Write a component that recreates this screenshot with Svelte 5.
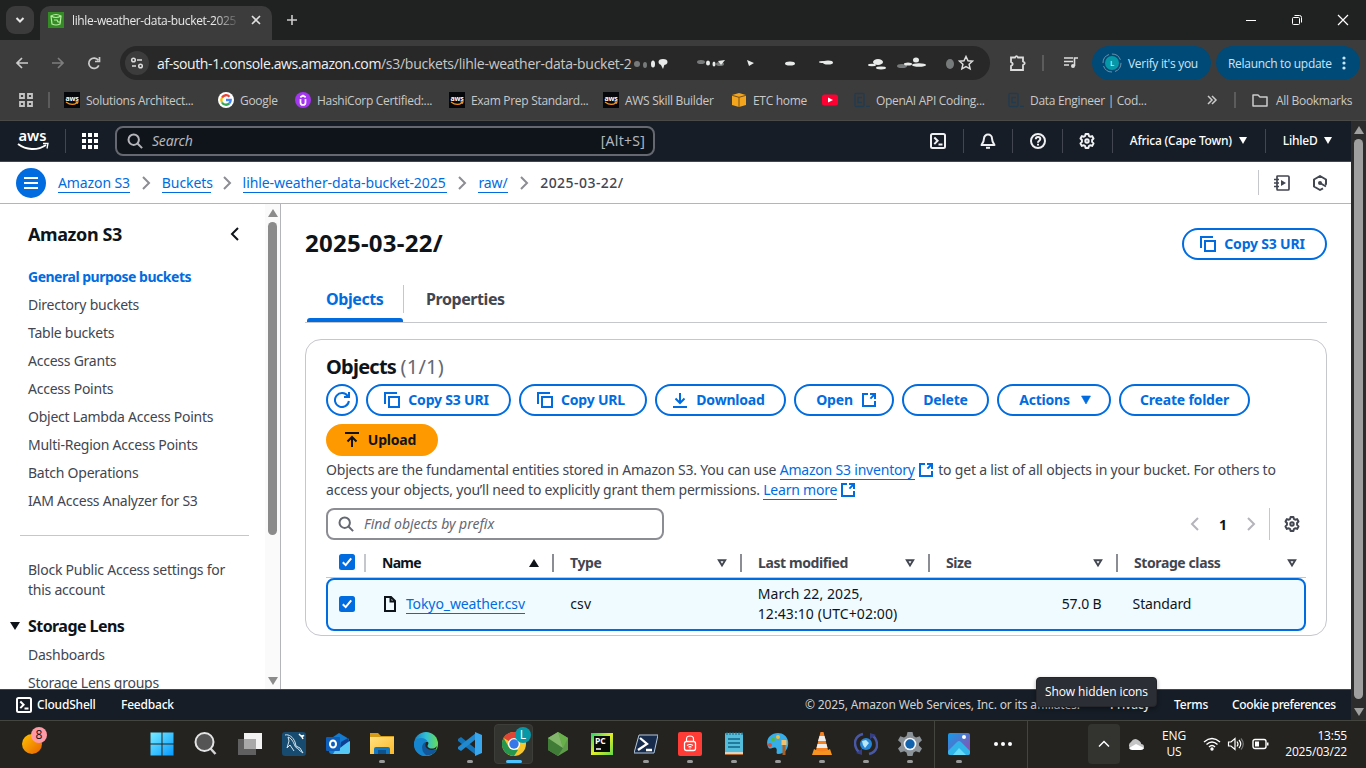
<script>
  const bookmarks = [
    { icon: 'aws', label: 'Solutions Architect...', w: 154 },
    { icon: 'google', label: 'Google', w: 77 },
    { icon: 'hashi', label: 'HashiCorp Certified:...', w: 154 },
    { icon: 'aws', label: 'Exam Prep Standard...', w: 154 },
    { icon: 'aws', label: 'AWS Skill Builder', w: 128 },
    { icon: 'cube', label: 'ETC home', w: 91 },
    { icon: 'youtube', label: '', w: 32 },
    { icon: 'code', label: 'OpenAI API Coding...', w: 154 },
    { icon: 'code', label: 'Data Engineer | Cod...', w: 197 }
  ];
  const crumbs = [
    { label: 'Amazon S3', w: 72 },
    { label: 'Buckets', w: 49 },
    { label: 'lihle-weather-data-bucket-2025', w: 204 },
    { label: 'raw/', w: 30 }
  ];
  const nav = ['General purpose buckets', 'Directory buckets', 'Table buckets', 'Access Grants', 'Access Points', 'Object Lambda Access Points', 'Multi-Region Access Points', 'Batch Operations', 'IAM Access Analyzer for S3'];
  const actions = [
    { label: 'Copy S3 URI', icon: 'copy', w: 145 },
    { label: 'Copy URL', icon: 'copy', w: 128 },
    { label: 'Download', icon: 'download', w: 131 },
    { label: 'Open', after: 'external', w: 100 },
    { label: 'Delete', w: 87 },
    { label: 'Actions', after: 'caret', w: 114 },
    { label: 'Create folder', w: 131 }
  ];
  const columns = ['Name', 'Type', 'Last modified', 'Size', 'Storage class'];
  const apps = ['start', 'search', 'tasks', 'mysql', 'outlook', 'files', 'edge', 'vscode', 'chrome', 'node', 'pycharm', 'shell', 'vpn', 'notepad', 'paint', 'vlc', 'sync', 'settings'];
  const running = ['files', 'vscode', 'shell', 'vpn', 'notepad', 'paint', 'vlc', 'sync', 'settings', 'photos'];
</script>

{#snippet icon(name)}
  <svg class="ic" viewBox="0 0 16 16" width="16" height="16" fill="none" stroke="currentColor" stroke-width="2">
    {#if name === 'copy'}
      <path d="M1 12V1h12M5 5h10v10H5z" />
    {:else if name === 'download'}
      <path d="M8 1v10M3.5 6.5 8 11l4.5-4.5M1 15h14" />
    {:else if name === 'upload'}
      <path d="M8 15V5M3.5 9.5 8 5l4.500 4.500M1 1h14" />
    {:else if name === 'external'}
      <path d="M7 2H2v12h12V9M9 2h5v5" /><path d="M14 2 8 8" stroke-dasharray="6.500 3" />
    {:else if name === 'caret'}
      <path d="M3.500 4h9L8 12z" fill="currentColor" stroke="currentColor" stroke-width=".6" />
    {:else if name === 'refresh'}
      <path d="M14.900 9A7 7 0 1 1 13.800 4.200M15 0v5h-5" />
    {:else if name === 'search'}
      <circle cx="6.700" cy="6.700" r="5.200" /><path d="m10.500 10.500 4.600 4.600" />
    {:else if name === 'gear'}
      <path d="M6.600 1h2.800l.5 2 1.200.7 2-.6 1.400 2.400-1.400 1.500v1.900l1.400 1.500-1.400 2.500-2-.6-1.200.7-.5 2H6.600l-.5-2-1.200-.7-2 .6-1.400-2.500 1.400-1.500V7L1.500 5.500l1.400-2.400 2 .6L6.100 3z" stroke-linejoin="round" /><circle cx="8" cy="8" r="1.700" />
    {:else if name === 'terminal'}
      <rect x="1" y="1" width="14" height="14" rx="1.500" /><path d="m4.300 4.500 3.300 3.300-3.300 3.300M8.500 11.500h4" />
    {:else if name === 'bell'}
      <path d="M8 1.500a4 4 0 0 0-4 4c0 3-1 4.500-2.500 6.500h13C13 10 12 8.500 12 5.500a4 4 0 0 0-4-4z" stroke-linejoin="round" /><path d="M6 14.800h4" />
    {:else if name === 'help'}
      <circle cx="8" cy="8" r="7" /><path d="M5.800 6.300c0-3 4.500-2.800 4.500-.2 0 1.700-2.300 1.700-2.300 3.600M8 10.800v1.700" />
    {:else if name === 'left'}
      <path d="m11 2-6 6 6 6" />
    {:else if name === 'right'}
      <path d="m5 2 6 6-6 6" />
    {:else if name === 'file'}
      <path d="M3 1h6l4 4v10H3zM8.500 1v4.500H13" />
    {:else if name === 'notebook'}
      <path d="M3 4V1.500Q3 1 3.500 1H14q1 0 1 1v12q0 1-1 1H3.500Q3 15 3 14v-2M0 4.500h5M0 8h5M0 11.500h5M3 5v6" stroke-width="1.700" /><path d="m7 5 5 3-5 3z" fill="currentColor" stroke="none" />
    {:else if name === 'hex'}
      <path d="M13 9.500 14 9V4.500L8 1 2 4.500v7L8 15l3-1.700" stroke-linejoin="round" /><circle cx="8" cy="8" r="2" fill="currentColor" stroke="none" /><path d="m8 8 6 3.500" />
    {:else if name === 'filter'}
      <path d="M4.800 5.300h6.400L8 10.500z" stroke-width="1.900" />
    {:else if name === 'sorted'}
      <path d="M3 12h10L8 4z" fill="currentColor" stroke="none" />
    {/if}
  </svg>
{/snippet}

{#snippet check()}
  <svg class="check" width="16" height="16" viewBox="0 0 16 16"><rect width="16" height="16" rx="2.500" fill="#006ce0" /><path d="m3.800 8.200 2.900 2.900 5.500-6.700" stroke="#fff" stroke-width="2" fill="none" /></svg>
{/snippet}

{#snippet favicon(name)}
  {#if name === 'aws'}
    <svg width="16" height="16" viewBox="0 0 16 16"><rect width="16" height="16" fill="#05070a" /><text x="8" y="8.500" fill="#fff" font-size="7" font-weight="700" text-anchor="middle" font-family="Open Sans">aws</text><path d="M2 10c4 3 8 3 11 .7M11.500 9.800h2.500l-.8 2" fill="none" stroke="#f79518" stroke-width="1.200" /></svg>
  {:else if name === 'google'}
    <svg width="16" height="16" viewBox="0 0 16 16"><circle cx="8" cy="8" r="8" fill="#fff" /><g fill="none" stroke-width="2.300"><path d="M11.500 4.700A4.700 4.700 0 0 0 4 5.600" stroke="#ea4335" /><path d="M4 5.600a4.700 4.700 0 0 0 0 4.900" stroke="#fbbc05" /><path d="M4 10.500a4.700 4.700 0 0 0 7.300.9" stroke="#34a853" /><path d="M11.300 11.400A4.700 4.700 0 0 0 12.700 8H8" stroke="#4285f4" /></g></svg>
  {:else if name === 'hashi'}
    <svg width="16" height="16" viewBox="0 0 16 16"><circle cx="8" cy="8" r="8" fill="#a435f0" /><path d="M5.500 7v3.500q0 2.500 2.500 2.500t2.500-2.500V7M5.300 5.300 8 3.600l2.700 1.700" fill="none" stroke="#fff" stroke-width="1.700" /></svg>
  {:else if name === 'cube'}
    <svg width="16" height="16" viewBox="0 0 16 16"><path d="m1 3 7-2 7 2v10l-7 2-7-2z" fill="#f2a51d" /><path d="m1 3.300 7 2 7-2M8 5.300V15" stroke="#79501a" fill="none" /></svg>
  {:else if name === 'youtube'}
    <svg width="16" height="16" viewBox="0 0 16 16"><rect y="2.500" width="16" height="11" rx="2.500" fill="#ff0033" /><path d="m6 5.500 5 2.500-5 2.500z" fill="#fff" /></svg>
  {:else}
    <svg width="16" height="16" viewBox="0 0 16 16" fill="none" stroke="#203b50" stroke-width="1.300"><rect x="1" y="1.500" width="9" height="13" rx="1" /><path d="M8 5.500H4v5h4M12 14.300h4" /></svg>
  {/if}
{/snippet}

{#snippet app(name)}
  <svg width="24" height="24" viewBox="0 0 24 24">
    {#if name === 'start'}
      <path d="M.5.500h11v11H.5zM12.500.500h11v11h-11zM.5 12.500h11v11H.5zM12.500 12.500h11v11h-11z" fill="url(#gStart)" />
    {:else if name === 'search'}
      <path d="m16 16 5.500 6" stroke="#d4d4d4" stroke-width="2.500" /><circle cx="10.500" cy="10" r="9" fill="#555" stroke="#e4e4e4" stroke-width="2" />
    {:else if name === 'tasks'}
      <path d="M6 1h18v16H6z" fill="#f2f2f2" /><path d="M0 7h18v16H0z" fill="#606060" /><path d="M6 7h12v10H6z" fill="#a9a9a9" />
    {:else if name === 'mysql'}
      <rect width="24" height="24" rx="3" fill="#174b70" /><path d="M3 3c4-1 8 2 10 7l1 4 4 2 3 5-4-3c-1-3-3-1-4-4-2-5-4-8-7-9l1 4-2 7 3-3 4 6" fill="none" stroke="#d1e4ee" stroke-width="1" /><path d="m17 2 2 2 3-.5-2 1.500 1 2" fill="none" stroke="#fff" stroke-width="1.500" />
    {:else if name === 'outlook'}
      <path d="m4 7 9-6 10 6v13q0 2-2 2H6q-3 0-3-3z" fill="#137bd0" /><path d="m10 17 14-8v11q0 2-2 2H7z" fill="#55c8f5" /><path d="m15 10 7-4 1 3-9 7z" fill="#103f91" /><rect y="5" width="14" height="14" rx="1" fill="#0d5dbb" /><ellipse cx="7" cy="12" rx="3" ry="3.600" stroke="#fff" stroke-width="2" fill="none" />
    {:else if name === 'files'}
      <path d="M0 1h8l3 3h13v7H0z" fill="#d69b17" /><path d="M0 5h24v17H0z" fill="url(#gFolder)" /><path d="M4 22v-5q0-2 2-2h12q2 0 2 2v5z" fill="#1476bf" /><path d="M8 18h8v4H8z" fill="#0c528e" />
    {:else if name === 'edge'}
      <circle cx="12" cy="12" r="12" fill="url(#gEdge)" /><path d="M0 12C1 5 11 4 14 10c-3-1-6 1-6 5 0 4 3 7 7 8.500C7 26 0 20 0 12z" fill="#1685cf" /><path d="M8 15c0-3 2-5 4-5-2 5 3 9 11 7-2 5-7 7-11 6-3-2-4-5-4-8z" fill="#12579c" /><path d="M14 10c1.500 2-1.500 3.500 0 5 2 2.500 7 2 9-1l-1 3c-7 3-13-2-10-7z" fill="#242422" />
    {:else if name === 'vscode'}
      <path d="m0 7 3-2 15 12v6L0 9z" fill="#1474b9" /><path d="m0 17 3 2L18 7V1L0 15z" fill="#2089cf" /><path d="m17 0 7 3v18l-7 3z" fill="#38a7ed" />
    {:else if name === 'chrome'}
      <circle cx="12" cy="12" r="12" fill="#f7c62b" /><path d="M12 12 1.600 6a12 12 0 0 1 20.800 0z" fill="#df4437" /><path d="M12 24A12 12 0 0 1 1.600 6l5.300 9.200Q9 18 13 17.500l3 .5z" fill="#26964f" /><circle cx="12" cy="12" r="6" fill="#fff" /><circle cx="12" cy="12" r="4.700" fill="#3676e8" />
    {:else if name === 'node'}
      <path d="m12 0 10 6v12l-10 6-10-6V6z" fill="#5f9c4a" /><path d="m12 0 10 6-5 10z" fill="#68b04a" /><path d="m2 6 15 10-5 8-10-6z" fill="#407c38" /><path d="m12 0 5 16L2 6z" fill="#82b66a" />
    {:else if name === 'pycharm'}
      <rect x="1" y="1" width="22" height="22" fill="url(#gPy)" /><rect x="4" y="4" width="16" height="16" fill="#090b06" /><text x="5" y="12" fill="#fff" font-size="8.500" font-weight="700" font-family="Open Sans">PC</text><path d="M6 17h5" stroke="#fff" stroke-width="1.500" />
    {:else if name === 'shell'}
      <path d="M5 3h19l-4 18H0z" fill="#172b4c" stroke="#b3c7dc" /><path d="m6 6 7 6-9 6M12 18h6" fill="none" stroke="#fff" stroke-width="2.300" />
    {:else if name === 'vpn'}
      <rect width="24" height="24" rx="2" fill="#ff3c35" /><rect x="6.500" y="9.500" width="11" height="9" rx="2" fill="none" stroke="#fff" stroke-width="1.300" /><path d="M8.500 9V7q0-3 3.500-3t3.500 3v2M9 13.500q3-2 6 0M10.500 15.200q1.500-1 3 0M12 16.500v.8" fill="none" stroke="#fff" stroke-width="1.200" />
    {:else if name === 'notepad'}
      <rect x="3" y="1" width="18" height="22" rx="1" fill="#55bddc" /><path d="M3 20h18v3H3z" fill="#d9d2c6" /><path d="M3 22.500h18" stroke="#b16828" /><path d="M6 7h12M6 11h12M6 15h12" stroke="#12658b" stroke-width="1.700" /><path d="M5 0v3M8 0v3M11 0v3M14 0v3M17 0v3M20 0v3" stroke="#146480" />
    {:else if name === 'paint'}
      <path d="M12 1C4 1-1 8 2 15c2 4 5-1 8 1 2 2-1 6 2 6 8 0 11-7 10-13-1-5-5-8-10-8z" fill="#38aee9" /><circle cx="4" cy="13" r="2" fill="#de4d2f" /><circle cx="7" cy="7.500" r="2" fill="#55b93e" /><circle cx="12" cy="5" r="2" fill="#f6bd35" /><path d="M18 13v10" stroke="#a76028" stroke-width="3" /><path d="M15.500 8h5v5h-5z" fill="#f1c26f" />
    {:else if name === 'vlc'}
      <path d="m10.500 0-5 20h13l-5-20z" fill="#f5811f" /><path d="M9.500 4h5l1.500 5H8zM7.500 12h9l1 4h-11z" fill="#eee" /><path d="m4 17-2 6h20l-2-6q-8 5-16 0z" fill="#f69422" />
    {:else if name === 'sync'}
      <path d="M9 2C1 4-1 11 3 18l3 3M15 22c8-2 10-9 6-16l-3-3" fill="none" stroke="#4958a6" stroke-width="2.500" /><path d="m2 21 6 2V17zM22 3l-6-2v6z" fill="#363f86" /><circle cx="12" cy="12" r="6" fill="#2685d7" /><path d="m8 9 4-1 3 3-4 5-2-3zM14 14l2-2" fill="#bae6f4" />
    {:else if name === 'settings'}
      <path d="M9.500 0h5l1 4 2.500 1.400 3.700-1.200 2.300 4L21 11v2.500l3 3-2.500 4-3.700-1.200-2.300 1.300-1 3.400h-5l-1-3.400-2.300-1.300-3.700 1.200L0 16.500l3-3V11L0 8.200l2.300-4L6 5.400 8.500 4z" fill="#8b9298" /><circle cx="12" cy="12" r="6.300" fill="#f3f6f8" /><circle cx="12" cy="12" r="4.700" fill="#1162ad" />
    {:else if name === 'photos'}
      <rect x="1" y="1" width="22" height="22" rx="2" fill="url(#gPhoto)" /><path d="m1 19 9-9q2-2 4 0l9 9v2q0 2-2 2H3q-2 0-2-2z" fill="#31b5e9" /><path d="m6 23 6-7 7 7z" fill="#65dbf7" /><circle cx="17" cy="5" r="2" fill="#fff" />
    {/if}
  </svg>
{/snippet}

<svg class="defs" width="0" height="0">
  <defs>
    <linearGradient id="gStart" x2="1" y2="1"><stop stop-color="#77edff" /><stop offset="1" stop-color="#079aff" /></linearGradient>
    <linearGradient id="gFolder" x2="1" y2="1"><stop stop-color="#ffe180" /><stop offset="1" stop-color="#fdb928" /></linearGradient>
    <linearGradient id="gEdge" x2="1" y2="0"><stop stop-color="#1480cb" /><stop offset=".5" stop-color="#31bfd5" /><stop offset="1" stop-color="#66dc55" /></linearGradient>
    <linearGradient id="gPy" x2="1" y2="1"><stop stop-color="#24d16d" /><stop offset=".5" stop-color="#e3ed27" /><stop offset="1" stop-color="#65d84d" /></linearGradient>
    <linearGradient id="gPhoto" x2="1" y2="1"><stop stop-color="#139be9" /><stop offset="1" stop-color="#9a47aa" /></linearGradient>
    <filter id="soft"><feGaussianBlur stdDeviation=".7" /></filter>
  </defs>
</svg>

<div class="screen">
  <header class="browser">
    <div class="tabstrip">
      <div class="tabmenu"><svg width="28" height="28"><path d="m10.500 12 3.500 3.500 3.500-3.500" fill="none" stroke="#e5e5e5" stroke-width="2" /></svg></div>
      <div class="tab">
        <svg width="16" height="16"><rect width="16" height="16" fill="#348b25" /><path d="m3 4 1 8q4 2 8 0l1-8q-5-3-10 0zm0 0q5 3 10 0M6 8h3l1 2h3" fill="none" stroke="#b5ed9f" stroke-width="1.200" /></svg>
        <span class="tabtitle">lihle-weather-data-bucket-2025</span>
        <svg class="x" width="12" height="12"><path d="m2 2 8 8m0-8-8 8" stroke="#e0e0e0" stroke-width="1.600" /></svg>
      </div>
      <svg class="plus" width="12" height="12"><path d="M6 1v10M1 6h10" stroke="#ccc" stroke-width="1.600" /></svg>
      <div class="win">
        <svg width="12" height="12"><path d="M1 6.500h10" stroke="#fff" /></svg>
        <svg width="12" height="12" fill="none" stroke="#fff"><rect x="1.500" y="3.500" width="7" height="7" rx="1" /><path d="M3.500 1.500h5q2 0 2 2v5" /></svg>
        <svg width="12" height="12"><path d="m1 1 10 10M11 1 1 11" stroke="#fff" stroke-width="1.200" /></svg>
      </div>
    </div>
    <div class="toolbar">
      <div class="navbtns">
        <svg width="16" height="16"><path d="M14 8H3m5-5L3 8l5 5" fill="none" stroke="#ccc" stroke-width="1.700" /></svg>
        <svg width="16" height="16"><path d="M2 8h11M8 3l5 5-5 5" fill="none" stroke="#7d7d7d" stroke-width="1.700" /></svg>
        <svg width="16" height="16"><path d="M12.800 10.300a5.200 5.200 0 1 1-.5-5M13.500 2v4.500H9" fill="none" stroke="#ccc" stroke-width="1.700" /></svg>
      </div>
      <div class="omnibox">
        <span class="site"><svg width="14" height="14" fill="none" stroke="#ddd" stroke-width="1.500"><circle cx="3.500" cy="4" r="1.800" /><path d="M7 4h5M2 10h4" /><circle cx="10.500" cy="10" r="1.800" /></svg></span>
        <span class="url"><b>af-south-1.console.aws.amazon.com</b>/s3/buckets/lihle-weather-data-bucket-2</span>
        <svg class="smudge" width="326" height="20" filter="url(#soft)">
          <g fill="#777a7a"><ellipse cx="5" cy="11" rx="3" ry="3" /><ellipse cx="13" cy="12" rx="2" ry="3" /><ellipse cx="69" cy="9" rx="4" ry="2" /><ellipse cx="88" cy="11" rx="4" ry="2" /><ellipse cx="270" cy="13" rx="5" ry="2" /><ellipse cx="318" cy="11" rx="4" ry="5" /></g>
          <g fill="#e8eaea"><ellipse cx="21" cy="11" rx="2" ry="3.500" /><ellipse cx="31" cy="9" rx="4.500" ry="3" /><path d="m28 10 5 0-2 6z" /><ellipse cx="76" cy="10" rx="2" ry="2.500" /><ellipse cx="82" cy="11" rx="1.500" ry="2.500" /><path d="m86 8 7-1-4 5zM115 7l7 3-5 3z" /><ellipse cx="158" cy="10.500" rx="5" ry="2" /><ellipse cx="196" cy="9.500" rx="5" ry="2" /><ellipse cx="191" cy="9" rx="4" ry="1" /><ellipse cx="246" cy="9" rx="5" ry="3" /><ellipse cx="240" cy="12" rx="4" ry="1.200" /><ellipse cx="249" cy="15" rx="5" ry="1.400" /><ellipse cx="284" cy="7" rx="3" ry="2.500" /><ellipse cx="287" cy="12" rx="7" ry="1.800" /><ellipse cx="276" cy="11" rx="4" ry="1.500" /></g>
        </svg>
        <svg class="star" width="16" height="16"><path d="m8 1.500 2 4.200 4.500.5-3.400 3.100 1 4.500L8 11.500l-4.100 2.300 1-4.500-3.400-3.100 4.500-.5z" fill="none" stroke="#ddd" stroke-width="1.500" /></svg>
      </div>
      <svg class="ext" width="18" height="18"><path d="M2 3.500h4Q7.500.8 9 3.500h5v4q3.500 1.500 0 3.500v5H2v-4q3.500-2 0-4z" fill="none" stroke="#ddd" stroke-width="1.800" /></svg>
      <i class="vbar"></i>
      <svg class="media" width="18" height="16"><path d="M2 3h9M2 6.500h9M2 10h5M12.500 11V3h3.500" fill="none" stroke="#ddd" stroke-width="1.600" /><circle cx="11" cy="11" r="2" fill="#ddd" /></svg>
      <div class="pill verify"><svg width="20" height="20"><circle cx="10" cy="10" r="9" fill="none" stroke="#6e91a9" stroke-dasharray="11 3" /><circle cx="10" cy="10" r="7" fill="#0798a8" /><text x="10" y="13" fill="#fff" font-size="8" text-anchor="middle">L</text></svg><span>Verify it's you</span></div>
      <div class="pill relaunch"><span>Relaunch to update</span><svg width="4" height="16" fill="#c5e7ff"><circle cx="2" cy="3" r="1.600" /><circle cx="2" cy="8" r="1.600" /><circle cx="2" cy="13" r="1.600" /></svg></div>
    </div>
    <div class="bookmarks">
      <svg class="appsgrid" width="16" height="16" fill="none" stroke="#c4c4c4" stroke-width="1.800"><path d="M2 2h4v4H2zM10 2h4v4h-4zM2 10h4v4H2zM10 10h4v4h-4z" /></svg>
      <i class="vbar first"></i>
      {#each bookmarks as b}
        <div class="bookmark" style:width="{b.w}px">{@render favicon(b.icon)}<span>{b.label}</span></div>
      {/each}
      <svg class="more" width="12" height="12"><path d="m2 2 4 4-4 4m4-8 4 4-4 4" fill="none" stroke="#ccc" stroke-width="1.500" /></svg>
      <i class="vbar second"></i>
      <svg class="folder" width="16" height="14"><path d="M1 2h5l2 2h7v9H1z" fill="none" stroke="#ccc" stroke-width="1.500" stroke-linejoin="round" /></svg>
      <span>All Bookmarks</span>
    </div>
  </header>

  <div class="viewport">
    <div class="page">
      <div class="topnav">
        <svg class="awslogo" width="32" height="24"><text x="15.500" y="11.500" fill="#fff" font-family="Noto Sans" font-size="15" font-weight="600" text-anchor="middle" textLength="28" lengthAdjust="spacingAndGlyphs">aws</text><path d="M1 15c8 6 19 7 28 1" fill="none" stroke="#fff" stroke-width="2" /><path d="M26 14.500h5l-1 5" fill="none" stroke="#fff" stroke-width="1.300" /></svg>
        <i class="navsep s1"></i>
        <svg class="services" width="16" height="16" fill="#fff"><path d="M0 0h4v4H0zM6 0h4v4H6zM12 0h4v4h-4zM0 6h4v4H0zM6 6h4v4H6zM12 6h4v4h-4zM0 12h4v4H0zM6 12h4v4H6zM12 12h4v4h-4z" /></svg>
        <div class="topsearch">{@render icon('search')}<em>Search</em><span>[Alt+S]</span></div>
        <div class="navicons">
          <div>{@render icon('terminal')}</div><div>{@render icon('bell')}</div><div>{@render icon('help')}</div><div>{@render icon('gear')}</div>
        </div>
        <div class="region"><span>Africa (Cape Town)</span><i class="tri"></i></div>
        <div class="user"><span>LihleD</span><i class="tri"></i></div>
      </div>
      <div class="crumbs">
        <div class="burger"><i></i><i></i><i></i></div>
        {#each crumbs as c}
          <a style:width="{c.w}px">{c.label}</a><span class="sep">{@render icon('right')}</span>
        {/each}
        <span class="here">2025-03-22/</span>
        <div class="crumbtools"><span>{@render icon('notebook')}</span><span>{@render icon('hex')}</span></div>
      </div>
      <div class="body">
        <aside>
          <div class="sidecontent">
            <div class="sidehead"><span>Amazon S3</span>{@render icon('left')}</div>
            <nav>
              {#each nav as n, i}<a class:active={i === 0}>{n}</a>{/each}
            </nav>
            <hr />
            <p>Block Public Access settings for<br />this account</p>
            <div class="lens"><i class="tri"></i>Storage Lens</div>
            <nav><a>Dashboards</a><a>Storage Lens groups</a></nav>
          </div>
          <div class="bar sidebarbar"><i class="up"></i><i class="thumb"></i><i class="down"></i></div>
        </aside>
        <main>
          <div class="heading"><h1>2025-03-22/</h1><button class="btn w145 lead">{@render icon('copy')}<span>Copy S3 URI</span></button></div>
          <div class="tabs"><div class="on">Objects</div><div>Properties</div></div>
          <section>
            <h2>Objects <span>(1/1)</span></h2>
            <div class="actions">
              <button class="btn round">{@render icon('refresh')}</button>
              {#each actions as a}
                <button class="btn" class:lead={a.icon} class:trail={a.after} style:width="{a.w}px">
                  {#if a.icon}{@render icon(a.icon)}{/if}<span>{a.label}</span>{#if a.after}{@render icon(a.after)}{/if}
                </button>
              {/each}
              <button class="btn upload lead">{@render icon('upload')}<span>Upload</span></button>
            </div>
            <div class="desc">Objects are the fundamental entities stored in Amazon S3. You can use <a>Amazon S3 inventory </a>{@render icon('external')} to get a list of all objects in your bucket. For others to<br />access your objects, you’ll need to explicitly grant them permissions. <a>Learn more </a>{@render icon('external')}</div>
            <div class="filters">
              <div class="find">{@render icon('search')}<em>Find objects by prefix</em></div>
              <div class="pager"><span class="dim">{@render icon('left')}</span><b>1</b><span class="dim">{@render icon('right')}</span><span class="prefs">{@render icon('gear')}</span></div>
            </div>
            <div class="thead">
              <div class="sel">{@render check()}</div>
              {#each columns as c, i}
                <div class="th" class:sorted={i === 0}><span>{c}</span>{@render icon(i === 0 ? 'sorted' : 'filter')}</div>
              {/each}
            </div>
            <div class="row">
              <div class="sel">{@render check()}</div>
              <div class="td name">{@render icon('file')}<a>Tokyo_weather.csv</a></div>
              <div class="td">csv</div>
              <div class="td">March 22, 2025,<br />12:43:10 (UTC+02:00)</div>
              <div class="td size">57.0 B</div>
              <div class="td">Standard</div>
            </div>
          </section>
        </main>
      </div>
      <footer>
        {@render icon('terminal')}<span class="cs">CloudShell</span><span class="fb">Feedback</span>
        <span class="legal">© 2025, Amazon Web Services, Inc. or its affiliates.</span>
        <span class="privacy">Privacy</span><span class="terms">Terms</span><span class="cookie">Cookie preferences</span>
      </footer>
    </div>
    <div class="bar pagebar"><i class="up"></i><i class="thumb"></i><i class="down"></i></div>
  </div>

  <div class="taskbar">
    <div class="weather"><i></i><b>8</b></div>
    {#each apps as a}
      <div class="app" class:focus={a === 'chrome'} class:run={running.includes(a)}>{@render app(a)}{#if a === 'chrome'}<b>L</b>{/if}</div>
    {/each}
    <div class="app pinned run">{@render app('photos')}</div>
    <div class="app dots"><i></i><i></i><i></i></div>
    <div class="tray">
      <div class="hidden"><svg width="12" height="8"><path d="m1 6.500 5-5 5 5" fill="none" stroke="#fff" stroke-width="1.500" /></svg></div>
      <svg class="cloud" width="18" height="12"><path d="M4 11a4 4 0 0 1 0-7Q7-1 11 2t3 4q3 0 3 3t-3 2z" fill="#c5c5c5" /><path d="m2 10 7-4 8 4q-1 2-3 2H5q-2 0-3-2z" fill="#fff" /></svg>
      <div class="lang">ENG<br />US</div>
      <svg class="wifi" width="18" height="16" fill="none" stroke="#fff" stroke-width="1.400"><path d="M1 6q8-7 16 0M3.500 8.500q5.500-5 11 0M6 11q3-3 6 0" /><circle cx="9" cy="13" r="1" fill="#fff" /></svg>
      <svg class="sound" width="18" height="16" fill="none" stroke="#fff" stroke-width="1.200"><path d="M1.500 6H4l4-3.500v11L4 10H1.500zM10 5.500q2 2.500 0 5M12 4q3.500 4 0 8" /><path d="M14 2.500q4.500 5.500 0 11" stroke="#777" /></svg>
      <svg class="battery" width="18" height="12"><rect x="1" y="1.500" width="13" height="9" rx="2" fill="none" stroke="#fff" stroke-width="1.400" /><path d="M3 3.500h4v5H3zM15 4.500h1.500v3H15z" fill="#fff" /></svg>
      <div class="clock">13:55<br />2025/03/22</div>
    </div>
  </div>
  <div class="tooltip">Show hidden icons</div>
</div>

<style>
  :global(body) { margin: 0; overflow: hidden; }
  * { box-sizing: border-box; }
  svg { display: block; flex: none; }
  .defs { position: absolute; }
  .screen { position: relative; width: 1366px; height: 768px; overflow: hidden; font-family: "Noto Sans", sans-serif; display: flex; flex-direction: column; }
  .browser { height: 121px; background: #3c3c3c; border-bottom: 1px solid #4a4b49; font-family: "Open Sans", sans-serif; font-size: 12px; color: #c9c9c9; white-space: nowrap; flex: none; }
  .tabstrip { height: 40px; background: #202221; display: flex; align-items: center; }
  .tabmenu { margin-left: 6px; width: 28px; height: 28px; border-radius: 9px; background: #3b3b3b; }
  .tab { margin: 6px 0 0 6px; padding: 0 8px 6px; width: 232px; height: 34px; border-radius: 10px 10px 0 0; background: #3c3c3c; display: flex; align-items: center; }
  .tabtitle { margin-left: 8px; width: 168px; overflow: hidden; color: #e8e8e8; letter-spacing: -.36px; mask-image: linear-gradient(90deg, #000 85%, transparent); }
  .x { margin-left: 10px; }
  .plus { margin-left: 14px; }
  .win { margin-left: auto; margin-right: 17px; display: flex; gap: 34px; }
  .toolbar { height: 46px; display: flex; align-items: center; }
  .navbtns { display: flex; gap: 20px; margin-left: 14px; width: 106px; }
  .omnibox { display: flex; align-items: center; width: 870px; height: 34px; border-radius: 17px; background: #282828; }
  .site { margin-left: 5px; width: 24px; height: 24px; border-radius: 50%; background: #3c3c3c; display: grid; place-items: center; }
  .url { margin-left: 8px; width: 475px; font-size: 14px; letter-spacing: -.26px; }
  .url b { font-weight: 400; color: #f1f1f1; letter-spacing: -.4px; }
  .ext { margin-left: 19px; }
  .vbar { width: 2px; height: 16px; background: #5c5c5c; }
  .toolbar .vbar { margin-left: 15px; }
  .media { margin-left: 18px; }
  .pill { height: 34px; border-radius: 17px; background: #004a77; color: #c8e6fb; display: flex; align-items: center; letter-spacing: -.3px; }
  .verify { margin-left: 12px; width: 119px; padding-left: 10px; gap: 6px; }
  .relaunch { margin-left: 5px; width: 144px; padding-left: 12px; }
  .relaunch span { width: 114px; }
  .bookmarks { height: 34px; padding-bottom: 6px; display: flex; align-items: center; letter-spacing: -.3px; }
  .appsgrid { margin-left: 18px; }
  .vbar.first { margin: 0 14px; }
  .bookmark { display: flex; align-items: center; gap: 6px; flex: none; }
  .more { margin-left: 1px; }
  .vbar.second { margin: 0 16px; }
  .folder { margin-right: 8px; }

  .viewport { display: flex; height: 599px; flex: none; }
  .page { width: 1351px; display: flex; flex-direction: column; font-size: 14px; color: #0f141a; background: #fff; white-space: nowrap; }
  .topnav { height: 41px; background: #161d26; border-bottom: 1px solid #424650; display: flex; align-items: center; color: #fff; flex: none; }
  .awslogo { margin-left: 17px; }
  .navsep { width: 1px; height: 24px; background: #424650; }
  .s1 { margin: 0 16px; }
  .topsearch { margin-left: 17px; width: 540px; height: 30px; border: 2px solid #656871; border-radius: 8px; background: #0f141a; color: #b4b4bb; display: flex; align-items: center; padding: 0 8px 0 10px; letter-spacing: -.2px; }
  .topsearch em { margin-left: 9px; padding-bottom: 1px; }
  .topsearch span { margin-left: auto; letter-spacing: .25px; padding-bottom: 1px; }
  .navicons { display: flex; margin-left: 259px; color: #eef0f2; }
  .navicons div { width: 49.7px; height: 24px; display: grid; place-items: center; border-right: 1px solid #424650; }
  .region, .user { display: flex; align-items: center; font-size: 12px; font-weight: 500; height: 24px; letter-spacing: -.22px; padding-bottom: 1px; }
  .region { padding-left: 17px; width: 153px; border-right: 1px solid #424650; }
  .region span { width: 109px; }
  .user { padding-left: 17px; }
  .user span { width: 41px; }
  .tri { width: 0; height: 0; border: solid transparent; border-width: 7px 4.5px 0; border-top-color: currentColor; }
  .crumbs { height: 42px; border-bottom: 1px solid #b4b4bb; display: flex; align-items: center; flex: none; }
  .burger { width: 30px; height: 30px; border-radius: 50%; background: #006ce0; margin: 0 12px 0 16px; display: flex; flex-direction: column; gap: 3px; align-items: center; justify-content: center; }
  .burger i { width: 14px; height: 2px; background: #fff; }
  a { color: #006ce0; }
  .crumbs a { border-bottom: 1px solid #006ce0; line-height: 18px; letter-spacing: -.08px; flex: none; position: relative; top: 1px; }
  .crumbs a:first-of-type { letter-spacing: -.1px; }
  .sep { width: 31.8px; display: grid; place-items: center; color: #8c8c94; flex: none; }
  .here { color: #424650; font-weight: 500; letter-spacing: .45px; }
  .crumbtools { margin-left: auto; height: 25px; border-left: 1px solid #c6c6cd; display: flex; gap: 22px; align-items: center; padding: 0 23px 0 15px; color: #424650; }
  .body { height: 485px; display: flex; overflow: hidden; }
  aside { width: 281px; border-right: 1px solid #b4b4bb; display: flex; overflow: hidden; flex: none; }
  .sidecontent { width: 265px; color: #424650; letter-spacing: -.24px; }
  .sidehead { padding: 19px 22px 0 28px; height: 59px; display: flex; justify-content: space-between; font-size: 18px; line-height: 22px; font-weight: 700; color: #0f141a; letter-spacing: -.4px; }
  .sidehead .ic { margin-top: 3px; }
  nav a { display: block; height: 28px; line-height: 28px; padding-left: 28px; color: #424650; }
  nav a.active { color: #006ce0; font-weight: 700; letter-spacing: -.49px; }
  hr { margin: 20px 16px 0 20px; border: 0; border-top: 1px solid #c6c6cd; }
  p { margin: 24px 0 0 28px; line-height: 20px; }
  .lens { margin-top: 14px; height: 27px; padding-bottom: 3px; line-height: 24px; display: flex; align-items: center; color: #0f141a; font-size: 16px; font-weight: 700; letter-spacing: -.56px; }
  .lens .tri { margin: 0 8px 0 10px; border-width: 8px 5px 0; }
  .bar { width: 15px; display: flex; flex-direction: column; align-items: center; background: #fafafa; color: #8b8b8b; flex: none; }
  .bar .up, .bar .down { border: solid transparent; border-width: 0 5px 8px; border-bottom-color: currentColor; margin-top: 5px; }
  .bar .down { border-width: 8px 5px 0; border-top-color: currentColor; margin: auto 0 4px; }
  .bar .thumb { width: 9px; border-radius: 5px; background: currentColor; margin-top: 5px; height: 313px; }
  .pagebar { background: #2c2c2c; color: #9f9f9f; }
  .pagebar .thumb { height: 560px; }
  main { width: 1070px; padding: 24px 24px 0; }
  .heading { display: flex; justify-content: space-between; height: 57px; }
  h1 { margin: 0; font-size: 24px; line-height: 30px; letter-spacing: .25px; }
  .btn { height: 32px; padding: 0 0 2px; border: 2px solid #006ce0; background: #fff; border-radius: 16px; color: #006ce0; font: 700 14px "Noto Sans", sans-serif; letter-spacing: -.2px; display: flex; align-items: center; justify-content: center; gap: 8px; }
  .btn .ic { position: relative; top: 1px; }
  .lead { padding-right: 4px; }
  .trail { padding-left: 5px; }
  .w145 { width: 145px; }
  .round { width: 32px; }
  .upload { width: 112px; background: #ff9900; border-color: #ff9900; color: #0f141a; }
  .tabs { height: 38px; border-bottom: 1px solid #c6c6cd; display: flex; font-size: 16px; font-weight: 700; line-height: 28px; color: #424650; letter-spacing: -.42px; }
  .tabs div { padding-left: 22px; height: 28px; }
  .tabs .on { margin-left: 2px; padding-left: 19px; width: 97px; border-right: 1px solid #c6c6cd; color: #006ce0; position: relative; }
  .tabs .on::after { content: ""; position: absolute; left: 0; top: 33px; width: 96px; height: 4px; border-radius: 3px 3px 0 0; background: #006ce0; }
  section { margin-top: 16px; width: 1022px; height: 297px; border: 1px solid #c6c6cd; border-radius: 16px; padding: 15px 20px 0; }
  h2 { margin: 0 0 5px; font-size: 20px; line-height: 24px; letter-spacing: -.75px; }
  h2 span { font-weight: 400; color: #656871; letter-spacing: .2px; }
  .actions { display: flex; flex-wrap: wrap; gap: 8px; }
  .desc { margin-top: 4px; line-height: 20px; height: 40px; color: #424650; letter-spacing: -.2px; }
  .desc a { border-bottom: 1px solid #006ce0; white-space: pre; }
  .desc .ic { display: inline-block; vertical-align: -3px; color: #006ce0; margin: 0 1px 0 3px; }
  .desc a + .ic { margin-left: 3px; }
  .filters { margin-top: 8px; display: flex; justify-content: space-between; }
  .find { width: 338px; height: 32px; border: 2px solid #8c8c94; border-radius: 8px; display: flex; align-items: center; padding-left: 10px; gap: 10px; color: #656871; letter-spacing: -.02px; }
  .find em { padding-bottom: 1px; }
  .pager { display: flex; align-items: center; color: #424650; }
  .pager b { color: #0f141a; width: 40px; text-align: center; }
  .dim { color: #b4b4bb; }
  .prefs { margin-left: 10px; padding: 8px 6px 8px 14px; border-left: 1px solid #c6c6cd; }
  .thead { height: 38px; display: flex; align-items: center; padding-top: 8px; border-bottom: 1px solid #c6c6cd; font-weight: 700; color: #424650; letter-spacing: -.4px; }
  .thead .sel { width: 40px; padding-left: 13px; height: 18px; border-right: 2px solid #c6c6cd; }
  .th { width: 188px; height: 18px; display: flex; align-items: center; justify-content: space-between; padding: 0 10px 0 16px; border-right: 2px solid #8c8c94; }
  .th:last-child { border: 0; padding-right: 6px; }
  .th.sorted { color: #0f141a; letter-spacing: -.7px; }
  .row { height: 53px; display: flex; align-items: center; border: 2px solid #006ce0; border-radius: 8px; background: #f0fbff; line-height: 20px; letter-spacing: .08px; padding-bottom: 2px; }
  .row .sel { width: 39px; padding-left: 11px; }
  .td { width: 188px; padding-left: 16px; }
  .name { display: flex; gap: 8px; align-items: center; padding-left: 15px; letter-spacing: -.1px; }
  .name a { border-bottom: 1px solid #006ce0; line-height: 18px; position: relative; top: 1px; }
  .size { text-align: right; padding-right: 15px; letter-spacing: -.1px; }
  .size + .td { letter-spacing: -.15px; }
  footer { height: 31px; background: #161d26; border-top: 1px solid #424650; color: #fff; display: flex; align-items: center; font-size: 12px; padding: 0 0 1px 16px; letter-spacing: -.2px; font-weight: 500; }
  .cs { width: 84px; padding-left: 5px; }
  .fb { width: 689px; padding-left: 5px; }
  .legal { width: 305px; color: #d0d2d5; font-weight: 400; letter-spacing: -.15px; }
  .privacy { width: 64px; }
  .terms { width: 58px; }
  .cookie { letter-spacing: -.38px; }

  .taskbar { height: 48px; background: #242320; border-top: 1px solid #454540; display: flex; align-items: center; color: #fff; font-family: "Open Sans", sans-serif; font-size: 12px; }
  .weather { width: 140px; height: 48px; position: relative; flex: none; }
  .weather i { position: absolute; left: 22px; top: 13px; width: 20px; height: 20px; border-radius: 50%; background: linear-gradient(135deg, #ffc400, #e86100); }
  .weather b { position: absolute; left: 31px; top: 6px; width: 16px; height: 16px; border-radius: 50%; background: #ff99a4; color: #111; font-weight: 400; line-height: 16px; text-align: center; }
  .app { width: 44px; height: 47px; padding-bottom: 1px; display: grid; place-items: center; position: relative; flex: none; }
  .app.run::after { content: ""; position: absolute; bottom: 5px; left: 19px; width: 6px; height: 3px; border-radius: 2px; background: #999; }
  .app.focus::before { content: ""; position: absolute; inset: 3px 3px 4px 2px; border-radius: 4px; background: #33332f; border: 1px solid #3d3d3a; }
  .app.focus::after { content: ""; position: absolute; bottom: 5px; left: 14px; width: 16px; height: 3px; border-radius: 2px; background: #4cc2ff; }
  .app svg { position: relative; }
  .app b { position: absolute; left: 23px; top: 6px; width: 16px; height: 16px; border-radius: 50%; background: #0798a8; font-weight: 400; line-height: 16px; text-align: center; }
  .pinned { margin-left: 2px; width: 47px; border-left: 1px solid #454540; padding-left: 2px; }
  .pinned.run::after { left: 21px; }
  .dots { display: flex; align-items: center; gap: 3px; padding-right: 2px; justify-content: center; border-right: 1px solid #454540; width: 47px; }
  .dots i { width: 4px; height: 4px; border-radius: 50%; background: #fff; }
  .tray { display: flex; align-items: center; flex: 1; padding-bottom: 1px; }
  .hidden { margin-left: 60px; width: 32px; height: 40px; border-radius: 4px; background: #33332f; display: grid; place-items: center; }
  .cloud { margin-left: 7px; }
  .lang { margin-left: 16px; width: 26px; text-align: center; line-height: 16px; letter-spacing: -.2px; }
  .wifi { margin-left: 16px; }
  .sound { margin-left: 6px; }
  .battery { margin-left: 7px; }
  .clock { margin-left: auto; margin-right: 19px; text-align: right; line-height: 16px; letter-spacing: -.2px; }
  .tooltip { position: absolute; left: 1036px; top: 677px; width: 121px; height: 30px; text-align: center; background: #2c2e35; border: 1px solid #24262b; border-radius: 4px; color: #fff; font: 12px/28px "Open Sans", sans-serif; letter-spacing: -.12px; box-shadow: 0 2px 4px #0005; white-space: nowrap; }
</style>
